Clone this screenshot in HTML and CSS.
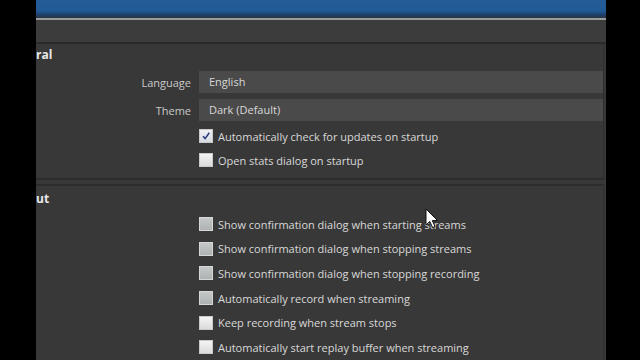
FILE: index.html
```html
<!DOCTYPE html>
<html lang="en">
  <head>
    <meta charset="UTF-8" />
    <meta name="viewport" content="width=device-width, initial-scale=1.0" />
    <title>Settings - General</title>
    <link rel="stylesheet" href="styles.css">
  </head>
  <body>
    <div class="window">
      <div class="titlebar"></div>
      <div class="toolbar"></div>

      <div class="group group-general">
        <h2 class="group-title">ral</h2>
        <div class="form-row">
          <span class="form-label">Language</span>
          <div class="combo">English</div>
        </div>
        <div class="form-row">
          <span class="form-label">Theme</span>
          <div class="combo">Dark (Default)</div>
        </div>
        <label class="check-row">
          <span class="checkbox checked">
            <svg viewBox="0 0 14 14" width="14" height="14"><path d="M3.5 7.2 L6 10 L10.8 3.2" fill="none" stroke="#2d3a78" stroke-width="1.8"/></svg>
          </span>
          <span class="check-text">Automatically check for updates on startup</span>
        </label>
        <label class="check-row">
          <span class="checkbox"></span>
          <span class="check-text">Open stats dialog on startup</span>
        </label>
      </div>

      <div class="group group-output">
        <h2 class="group-title">ut</h2>
        <div class="check-list">
          <label class="check-row"><span class="checkbox dim"></span><span class="check-text">Show confirmation dialog when starting streams</span></label>
          <label class="check-row"><span class="checkbox dim"></span><span class="check-text">Show confirmation dialog when stopping streams</span></label>
          <label class="check-row"><span class="checkbox dim"></span><span class="check-text">Show confirmation dialog when stopping recording</span></label>
          <label class="check-row"><span class="checkbox dim"></span><span class="check-text">Automatically record when streaming</span></label>
          <label class="check-row"><span class="checkbox"></span><span class="check-text">Keep recording when stream stops</span></label>
          <label class="check-row"><span class="checkbox"></span><span class="check-text">Automatically start replay buffer when streaming</span></label>
        </div>
      </div>

      <!-- mouse pointer -->
      <svg class="cursor" viewBox="0 0 14 22" width="14" height="22">
        <path d="M1 1 L1 17 L4.8 13.4 L7.6 19.6 L10 18.6 L7.3 12.6 L12.4 12.4 Z" fill="#fff" stroke="#111" stroke-width="1"/>
      </svg>
    </div>
  </body>
</html>
```

FILE: styles.css
```css
:root {
  --window-bg: #383838;
  --toolbar-bg: #3c3c3c;
  --combo-bg: #4a4a4a;
  --text-color: #d8d8d8;
  --label-color: #cacaca;
  --line-dark: #2a2a2a;
}

body {
  margin: 0;
  padding: 0;
  background-color: #000;
  overflow: hidden;
  font-family: "Open Sans", "Noto Sans", Arial, sans-serif;
  font-size: 11px;
  color: var(--text-color);
}

.window {
  position: relative;
  margin-left: 36px;
  width: 570px;
  height: 360px;
  background-color: var(--window-bg);
  overflow: hidden;
}

.titlebar {
  height: 18px;
  background: linear-gradient(to bottom, #235c98 0%, #215a94 60%, #1d4270 80%, #2b3440 100%);
  border-bottom: 2px solid #9a9c9e;
}

.toolbar {
  height: 22px;
  background-color: var(--toolbar-bg);
  border-bottom: 2px solid var(--line-dark);
}

.group {
  border-right: 1px solid #2f2f2f;
  margin-right: 2px;
}

.group-general {
  height: 134px;
  border-bottom: 2px solid #2c2c2c;
}

.group-output {
  margin-top: 4px;
  border-top: 2px solid #2c2c2c;
  height: 200px;
}

.group-title {
  margin: 0;
  height: 18px;
  padding-top: 2px;
  font-size: 12px;
  font-weight: bold;
  line-height: 18px;
  color: #e8e8e8;
}

.group-output .group-title {
  padding-top: 4px;
}

.form-row {
  display: flex;
  align-items: center;
  height: 22px;
  margin-bottom: 6px;
}

.group-general .form-row:first-of-type {
  margin-top: 7px;
}

.form-row + .check-row {
  margin-top: -3px;
}

.form-label {
  width: 155px;
  text-align: right;
  color: var(--label-color);
  margin-right: 8px;
}

.combo {
  flex: 1;
  height: 22px;
  line-height: 22px;
  padding-left: 10px;
  background-color: var(--combo-bg);
  color: var(--text-color);
}

.check-row {
  display: flex;
  align-items: center;
  height: 24px;
  padding-left: 163px;
}

.check-list {
  padding-top: 4px;
}

.check-list .check-row {
  height: 24.6px;
}

.checkbox {
  display: inline-flex;
  align-items: center;
  justify-content: center;
  width: 12px;
  height: 12px;
  margin-right: 5px;
  background: linear-gradient(to bottom, #f4f4f4, #dadada);
  border: 1px solid #c9c9c9;
}

.checkbox.dim {
  background: linear-gradient(to bottom, #c4c8c8, #aeb2b2);
  border-color: #d6d6d6;
}

.checkbox.checked {
  background: linear-gradient(to bottom, #f0f0f4, #d8dbe4);
}

.check-text {
  white-space: nowrap;
}

.cursor {
  position: absolute;
  left: 389px;
  top: 208px;
}
```
